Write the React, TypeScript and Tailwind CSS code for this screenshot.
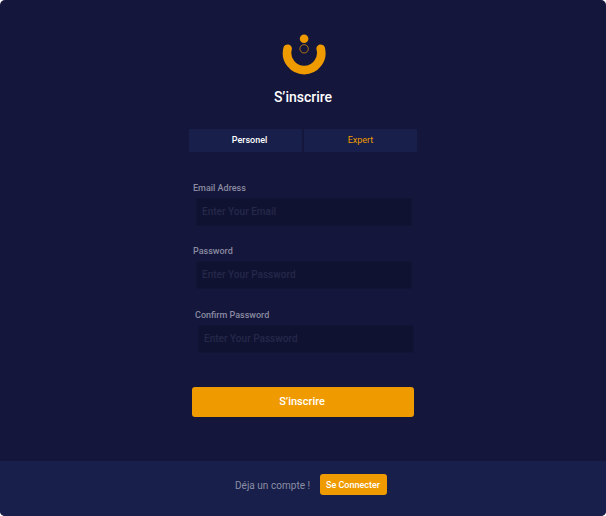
import React from "react";

function Logo() {
  return (
    <svg width="46" height="44" viewBox="281 32 46 44" fill="none" aria-hidden="true">
      <path d="M287.6 48.7A17.1 17.1 0 1 0 320.7 48.7" stroke="#ef9b00" strokeWidth="8.6" strokeLinecap="round" />
      <circle cx="304.1" cy="38.7" r="4.3" fill="#ef9b00" />
      <circle cx="304.1" cy="48.8" r="4.2" stroke="#ef9b00" strokeWidth="0.7" />
    </svg>
  );
}

type FieldProps = { label: string; placeholder: string; type: string; className: string };

function Field({ label, placeholder, type, className }: FieldProps) {
  return (
    <label className={`block h-11 w-[219px] ${className}`}>
      <span className="block h-[15px] text-[9px] leading-[11px] font-medium text-[#8a8ba0]">{label}</span>
      <input
        type={type}
        placeholder={placeholder}
        className="ml-[3px] block h-7 w-[216px] rounded-[2px] border border-[#111434] bg-[#101232] px-[5px] pb-[2px] text-[10px] font-medium tracking-[0.02px] text-white outline-none placeholder:text-[#252849]"
      />
    </label>
  );
}

export default function App() {
  return (
    <div className="h-[516px] w-[606px] bg-white font-['Roboto',sans-serif]">
      <div className="flex h-full flex-col overflow-hidden rounded-[5px] bg-[#14163c]">
        <main className="flex h-[461px] flex-col pt-8">
          <div className="pl-[281px]">
            <Logo />
          </div>
          <h1 className="mt-3 text-center text-[14px] leading-[18px] font-medium text-white">S’inscrire</h1>
          <div className="mt-[23px] ml-[189px] flex gap-[2px]">
            <button className="h-[23px] w-[113px] rounded-[1px] bg-[#181f4a] pl-2 text-[9px] font-medium text-white">Personel</button>
            <button className="h-[23px] w-[113px] rounded-[1px] bg-[#181f4a] text-[9px] text-[#ef9b00]">Expert</button>
          </div>
          <Field label="Email Adress" placeholder="Enter Your Email" type="email" className="mt-[31px] ml-[193px]" />
          <Field label="Password" placeholder="Enter Your Password" type="password" className="mt-[19px] ml-[193px]" />
          <Field label="Confirm Password" placeholder="Enter Your Password" type="password" className="mt-5 ml-[195px]" />
          <button className="mt-[33px] ml-[192px] h-[30px] w-[222px] rounded-[3px] bg-[#ef9b00] pr-[2px] text-[11px] font-medium text-white">
            S’inscrire
          </button>
        </main>
        <footer className="flex flex-1 items-start bg-[#181f4a] pt-[13px] pl-[235px]">
          <span className="mt-[6px] w-[85px] text-[10px] leading-3 tracking-[0.03px] text-[#8b8fa5]">Déja un compte !</span>
          <button className="h-[21px] w-[67px] rounded-[3px] bg-[#ef9b00] pt-[2px] pr-[1px] text-[9px] font-medium text-white">Se Connecter</button>
        </footer>
      </div>
    </div>
  );
}
